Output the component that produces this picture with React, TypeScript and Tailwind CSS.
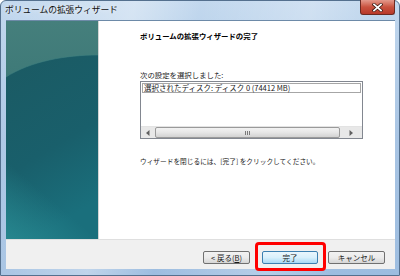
import React from "react";

const jp = { fontFamily: '"Noto Sans CJK JP", "Noto Sans", sans-serif' };

export default function App() {
  return (
    <div className="relative w-[400px] h-[276px] overflow-hidden bg-white" style={jp}>
      {/* window frame */}
      <div className="absolute inset-0 rounded-t-[6px] border border-[#54708e] bg-gradient-to-b from-[#c2d8ee] via-[#a9c5e4] to-[#9dbde0]">
        <div className="absolute inset-0 bg-[linear-gradient(100deg,rgba(255,255,255,0)_0%,rgba(255,255,255,0.35)_30%,rgba(255,255,255,0)_45%,rgba(255,255,255,0.25)_70%,rgba(255,255,255,0)_85%)]" />
      </div>

      <div className="relative flex flex-col w-full h-full">
        {/* title bar */}
        <div className="h-[20px] flex items-center pl-[5px] relative">
          <span className="text-[8.8px] leading-none text-[#101010] tracking-[-0.1px] [text-shadow:0_0_4px_rgba(255,255,255,0.9)]">
            ボリュームの拡張ウィザード
          </span>
          <div className="absolute right-[5px] top-0 w-[35px] h-[15px] rounded-b-[3px] border border-t-0 border-[#6b2a22] bg-gradient-to-b from-[#e3998c] via-[#c9523f] to-[#b8392a] flex items-center justify-center">
            <svg width="11" height="9" viewBox="0 0 11 9">
              <path d="M2 1.5 L9 7.5 M9 1.5 L2 7.5" stroke="#3a1a14" strokeWidth="3.2" strokeLinecap="square" />
              <path d="M2 1.5 L9 7.5 M9 1.5 L2 7.5" stroke="#ffffff" strokeWidth="1.7" strokeLinecap="square" />
            </svg>
          </div>
        </div>

        {/* client */}
        <div className="ml-[6px] mr-[5px] flex flex-col h-[249px] border-t border-[#6d8aa8]">
          <div className="flex h-[218px]">
            {/* watermark */}
            <div className="relative w-[92px] h-full overflow-hidden bg-[#1f5f68]">
              <svg className="absolute inset-0" width="92" height="218" viewBox="0 0 92 218">
                <defs>
                  <linearGradient id="g1" x1="0" y1="0" x2="0" y2="1">
                    <stop offset="0" stopColor="#457f7c" />
                    <stop offset="1" stopColor="#2c6b6d" />
                  </linearGradient>
                  <linearGradient id="g2" x1="0" y1="0" x2="0.3" y2="1">
                    <stop offset="0" stopColor="#1b5a63" />
                    <stop offset="0.6" stopColor="#195f6b" />
                    <stop offset="1" stopColor="#1a6f7c" />
                  </linearGradient>
                  <linearGradient id="g3" x1="0" y1="1" x2="1" y2="0">
                    <stop offset="0" stopColor="#2a8d94" stopOpacity="0.8" />
                    <stop offset="0.5" stopColor="#2a8d94" stopOpacity="0" />
                  </linearGradient>
                </defs>
                <rect x="0" y="0" width="92" height="218" fill="url(#g1)" />
                <path d="M0 56 C 25 40, 60 34, 92 34 L92 218 L0 218 Z" fill="url(#g2)" />
                <path d="M0 56 C 25 40, 60 34, 92 34" stroke="#3f8080" strokeWidth="1" fill="none" opacity="0.6" />
                <rect x="0" y="140" width="92" height="78" fill="url(#g3)" />
              </svg>
            </div>
            {/* content */}
            <div className="flex-1 bg-white border-l border-[#d4d4d4] pl-[41px] pt-[10px] text-[#000]">
              <div className="text-[7.4px] font-bold leading-[10px] h-[10px]">ボリュームの拡張ウィザードの完了</div>
              <div className="mt-[29px] text-[7.4px] leading-[10px] text-[#1a1a1a]">次の設定を選択しました:</div>
              <div className="mt-[1px] w-[223px] h-[58px] border border-[#828790] bg-white flex flex-col">
                <div className="mx-[1px] mt-[1px] h-[10px] border border-[#a6a6a6] bg-white flex items-center pl-[1px] text-[7.5px] leading-none text-[#1a1a1a] whitespace-nowrap">
                  選択されたディスク: ディスク 0 (74412 MB)
                </div>
                <div className="flex-1" />
                {/* horizontal scrollbar */}
                <div className="h-[12px] bg-[#e8e8e8] border-t border-[#e3e3e3] flex items-center">
                  <div className="w-[14px] h-full flex items-center justify-center">
                    <svg width="4" height="6" viewBox="0 0 4 6"><path d="M3.5 0 L0 3 L3.5 6 Z" fill="#606060" /></svg>
                  </div>
                  <div className="flex-1 h-[11px] rounded-[2px] border border-[#9a9a9a] bg-gradient-to-b from-[#f2f2f2] via-[#e6e6e6] to-[#d2d2d2] flex items-center justify-center gap-[1px]">
                    <div className="w-[1px] h-[4px] bg-[#7a7a7a]" />
                    <div className="w-[1px] h-[4px] bg-[#7a7a7a]" />
                    <div className="w-[1px] h-[4px] bg-[#7a7a7a]" />
                  </div>
                  <div className="w-[22px] h-full flex items-center justify-center">
                    <svg width="4" height="6" viewBox="0 0 4 6"><path d="M0.5 0 L4 3 L0.5 6 Z" fill="#606060" /></svg>
                  </div>
                </div>
              </div>
              <div className="mt-[17px] text-[6.7px] leading-[10px] text-[#1a1a1a] whitespace-nowrap">
                ウィザードを閉じるには、[完了] をクリックしてください。
              </div>
            </div>
          </div>
          {/* footer */}
          <div className="flex-1 bg-[#f0f0f0] border-t border-[#dfdfdf] relative flex items-start justify-end pr-[10px] pt-[11px]">
            <button className="w-[47px] h-[13px] mr-[12px] rounded-[2px] border border-[#707070] bg-gradient-to-b from-[#f2f2f2] via-[#ebebeb] to-[#d6d6d6] text-[7.5px] leading-none text-[#1a1a1a] flex items-center justify-center">
              &lt; 戻る(<span className="underline">B</span>)
            </button>
            <button className="w-[56px] h-[13px] mr-[10px] rounded-[2px] border border-[#3c7fb1] bg-gradient-to-b from-[#eaf6fd] via-[#d9f0fc] to-[#a7d9f5] text-[7.5px] leading-none text-[#1a1a1a] flex items-center justify-center">
              完了
            </button>
            <button className="w-[57px] h-[13px] rounded-[2px] border border-[#707070] bg-gradient-to-b from-[#f2f2f2] via-[#ebebeb] to-[#d6d6d6] text-[7.5px] leading-none text-[#1a1a1a] flex items-center justify-center">
              キャンセル
            </button>
          </div>
        </div>
      </div>

      {/* red highlight */}
      <div className="absolute left-[255px] top-[242px] w-[71px] h-[29px] rounded-[4px] border-[3px] border-[#ff0000]" />
    </div>
  );
}
